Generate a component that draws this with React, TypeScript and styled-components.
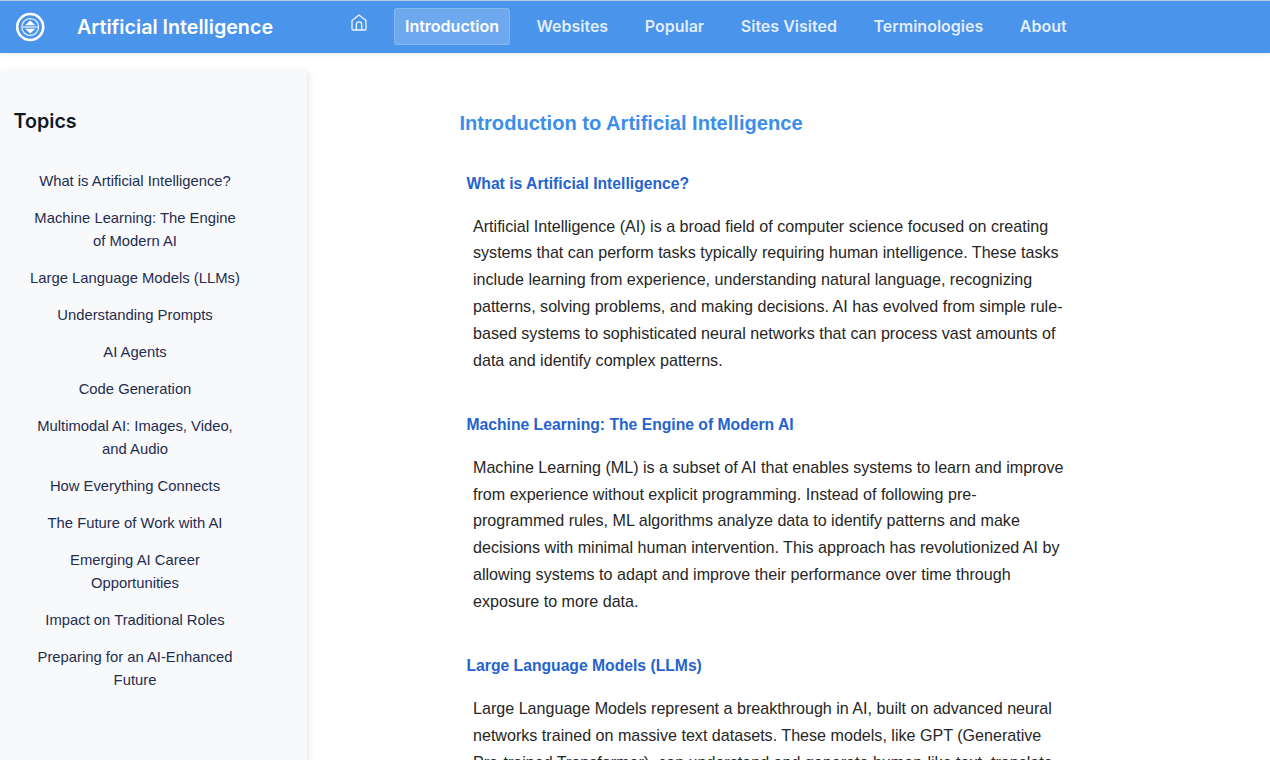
import React from "react";
import styled, { createGlobalStyle } from "styled-components";

const Global = createGlobalStyle`
  html, body { margin: 0; padding: 0; background: #fff; overflow: hidden; }
  body { font-family: "Liberation Sans", Arial, sans-serif; }
`;

const Page = styled.div`
  width: 1270px;
  height: 760px;
  overflow: hidden;
  border-top: 1px solid #b9c9de;
  box-sizing: border-box;
  background: #fff;
`;

const Header = styled.header`
  height: 52px;
  background: #4a94ec;
  display: flex;
  align-items: center;
  box-shadow: 0 2px 4px rgba(0, 0, 0, 0.06);
  font-family: Inter, sans-serif;
  color: #fff;
`;

const Brand = styled.div`
  width: 339px;
  display: flex;
  align-items: center;
  padding-left: 15px;
  box-sizing: border-box;
  gap: 32px;
`;

const BrandName = styled.span`
  font-size: 19.7px;
  font-weight: 600;
  white-space: nowrap;
`;

const Nav = styled.nav`
  display: flex;
  align-items: center;
  gap: 14.6px;
  padding-bottom: 1px;
`;

const HomeLink = styled.a`
  width: 40.4px;
  height: 37px;
  display: flex;
  align-items: flex-start;
  justify-content: center;
  padding-top: 6px;
  box-sizing: border-box;
`;

const NavItem = styled.a<{ $active?: boolean }>`
  height: 37px;
  display: flex;
  align-items: center;
  padding: 0 10px 1px;
  margin-right: ${(p) => (p.$active ? "0.8px" : "0")};
  border-radius: 3px;
  box-sizing: border-box;
  font-size: 16px;
  font-weight: 600;
  white-space: nowrap;
  color: ${(p) => (p.$active ? "#fff" : "rgba(255,255,255,0.85)")};
  background: ${(p) => (p.$active ? "rgba(255,255,255,0.2)" : "transparent")};
  border: 1px solid ${(p) => (p.$active ? "rgba(255,255,255,0.16)" : "transparent")};
`;

const Body = styled.div`
  display: flex;
  align-items: flex-start;
`;

const Sidebar = styled.aside`
  width: 307px;
  height: 700px;
  margin-top: 17px;
  flex-shrink: 0;
  background: #f8f9fb;
  box-shadow: 2px 2px 6px rgba(0, 0, 0, 0.1);
  padding: 37px 0 0 0;
  box-sizing: border-box;
`;

const SideTitle = styled.h2`
  margin: 0 0 35px 13.5px;
  font-family: Inter, sans-serif;
  font-size: 19.7px;
  line-height: 28px;
  font-weight: 600;
  color: #111827;
`;

const TopicList = styled.ul`
  list-style: none;
  margin: 0;
  padding: 0;
  width: 270px;
  display: flex;
  flex-direction: column;
  align-items: center;
  gap: 14px;
`;

const Topic = styled.li`
  width: 214px;
  text-align: center;
  font-size: 14.8px;
  line-height: 23px;
  color: #1e2d50;
`;

const Main = styled.main`
  margin-left: 152.5px;
  padding-top: 56px;
  width: 610px;
`;

const Title = styled.h1`
  margin: 0 0 35px;
  font-size: 20.1px;
  line-height: 28px;
  font-weight: 600;
  color: #3b8eea;
`;

const Section = styled.section`
  padding-left: 7px;
  margin-bottom: 39.8px;
`;

const SectionTitle = styled.h2`
  margin: 0 0 16.6px;
  font-size: 15.7px;
  line-height: 24px;
  font-weight: 700;
  color: #2563cf;
`;

const Para = styled.p`
  margin: 0;
  padding-left: 6.5px;
  font-size: 16.1px;
  line-height: 26.8px;
  color: #262626;
  width: 593.5px;
`;

const Logo = () => (
  <svg width="30" height="30" viewBox="0 0 30 30" fill="none">
    <circle cx="15.2" cy="15" r="13" stroke="#fff" strokeWidth="2.6" />
    <circle cx="15.2" cy="15" r="8.4" stroke="#fff" strokeWidth="1.3" opacity="0.85" />
    <path d="M15.2 8.4 20.2 13.2H10.2z" fill="#fff" />
    <path d="M15.2 21.6 20.2 16.8H10.2z" fill="#fff" />
    <rect x="7.6" y="14.4" width="15.2" height="1.2" fill="#fff" opacity="0.9" />
  </svg>
);

const HomeIcon = () => (
  <svg width="16" height="17" viewBox="0 0 16 17" fill="none" stroke="#fff" strokeWidth="1.3" strokeLinejoin="round" opacity="0.9">
    <path d="M1 6.6 8 1l7 5.6V15a1 1 0 0 1-1 1H2a1 1 0 0 1-1-1z" />
    <path d="M5.3 16v-5.4a2.7 2.7 0 0 1 5.4 0V16" />
  </svg>
);

const topics = [
  "What is Artificial Intelligence?",
  "Machine Learning: The Engine of Modern AI",
  "Large Language Models (LLMs)",
  "Understanding Prompts",
  "AI Agents",
  "Code Generation",
  "Multimodal AI: Images, Video, and Audio",
  "How Everything Connects",
  "The Future of Work with AI",
  "Emerging AI Career Opportunities",
  "Impact on Traditional Roles",
  "Preparing for an AI-Enhanced Future",
];

const sections = [
  {
    title: "What is Artificial Intelligence?",
    text: "Artificial Intelligence (AI) is a broad field of computer science focused on creating systems that can perform tasks typically requiring human intelligence. These tasks include learning from experience, understanding natural language, recognizing patterns, solving problems, and making decisions. AI has evolved from simple rule-based systems to sophisticated neural networks that can process vast amounts of data and identify complex patterns.",
  },
  {
    title: "Machine Learning: The Engine of Modern AI",
    text: "Machine Learning (ML) is a subset of AI that enables systems to learn and improve from experience without explicit programming. Instead of following pre-programmed rules, ML algorithms analyze data to identify patterns and make decisions with minimal human intervention. This approach has revolutionized AI by allowing systems to adapt and improve their performance over time through exposure to more data.",
  },
  {
    title: "Large Language Models (LLMs)",
    text: "Large Language Models represent a breakthrough in AI, built on advanced neural networks trained on massive text datasets. These models, like GPT (Generative Pre-trained Transformer), can understand and generate human-like text, translate languages, and answer questions.",
  },
];

const navItems = ["Introduction", "Websites", "Popular", "Sites Visited", "Terminologies", "About"];

export default function App() {
  return (
    <Page>
      <Global />
      <Header>
        <Brand>
          <Logo />
          <BrandName>Artificial Intelligence</BrandName>
        </Brand>
        <Nav>
          <HomeLink>
            <HomeIcon />
          </HomeLink>
          {navItems.map((n, i) => (
            <NavItem key={n} $active={i === 0}>
              {n}
            </NavItem>
          ))}
        </Nav>
      </Header>
      <Body>
        <Sidebar>
          <SideTitle>Topics</SideTitle>
          <TopicList>
            {topics.map((t) => (
              <Topic key={t}>{t}</Topic>
            ))}
          </TopicList>
        </Sidebar>
        <Main>
          <Title>Introduction to Artificial Intelligence</Title>
          {sections.map((s) => (
            <Section key={s.title}>
              <SectionTitle>{s.title}</SectionTitle>
              <Para>{s.text}</Para>
            </Section>
          ))}
        </Main>
      </Body>
    </Page>
  );
}
